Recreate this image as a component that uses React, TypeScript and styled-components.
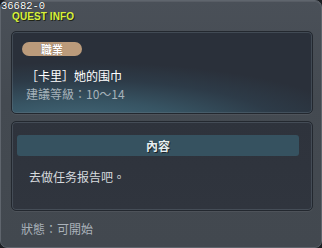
import React from "react";
import styled, { createGlobalStyle } from "styled-components";

const GlobalStyle = createGlobalStyle`
  html, body {
    margin: 0;
    padding: 0;
    background: #1c1f23;
  }
  * {
    box-sizing: border-box;
  }
`;

const Frame = styled.div`
  position: relative;
  width: 322px;
  height: 248px;
  display: flex;
  flex-direction: column;
  padding: 0 8px 0 10px;
  border: 1px solid #5f656d;
  border-radius: 7px;
  background: linear-gradient(180deg, #4a5058 0%, #444a51 40%, #42484f 100%);
  box-shadow: inset 0 1px 0 rgba(255, 255, 255, 0.08);
  font-family: "Noto Sans CJK TC", "Liberation Sans", sans-serif;
`;

const QuestId = styled.div`
  position: absolute;
  left: 0;
  top: -1px;
  font-family: "Liberation Mono", "DejaVu Sans Mono", monospace;
  font-size: 10.5px;
  line-height: 12px;
  color: #ffffff;
  text-shadow: 0 0 1px #000;
`;

const Title = styled.div`
  height: 30px;
  padding: 10px 0 0 1px;
  font-family: "Liberation Sans", "DejaVu Sans", sans-serif;
  font-weight: 700;
  font-size: 10px;
  line-height: 11px;
  letter-spacing: 0.1px;
  color: #d8f23a;
  text-shadow: 1px 1px 0 #20241a;
`;

const Panel = styled.div<{ $tall: number; $glow?: boolean }>`
  height: ${(p) => p.$tall}px;
  border: 1px solid #23282f;
  border-radius: 5px;
  box-shadow: inset 0 0 0 1px rgba(108, 124, 136, 0.35),
    0 1px 0 rgba(255, 255, 255, 0.06);
  background: ${(p) =>
    p.$glow
      ? "radial-gradient(ellipse 110% 95% at 22% 118%, #466c7d 0%, #375463 35%, #2d3b48 62%, #2a303a 85%)"
      : "linear-gradient(180deg, #2e333c 0%, #30353e 100%)"};
`;

const JobPanel = styled(Panel)`
  display: flex;
  flex-direction: column;
  align-items: flex-start;
  padding: 10px 0 0 10px;
`;

const Badge = styled.div`
  width: 60px;
  height: 14px;
  border-radius: 7px;
  background: #bb9b7b;
  color: #ffffff;
  font-size: 11px;
  line-height: 14px;
  font-weight: 700;
  text-align: center;
  text-shadow: 0 0 1px #5a4030;
`;

const QuestName = styled.div`
  margin: 13px 0 0 4px;
  font-size: 12px;
  line-height: 14px;
  color: #ffffff;
`;

const Level = styled.div`
  margin: 4px 0 0 4px;
  font-size: 12px;
  line-height: 14px;
  color: #a6b2ba;
`;

const Gap = styled.div`
  height: 7px;
`;

const ContentPanel = styled(Panel)`
  padding: 13px 13px 0 5px;
`;

const SectionHeader = styled.div`
  height: 21px;
  border-radius: 3px;
  background: #365260;
  color: #e6eef0;
  font-size: 12px;
  font-weight: 700;
  line-height: 21px;
  text-align: center;
  text-shadow: 1px 1px 0 #1a2228;
`;

const Body = styled.div`
  padding: 14px 0 0 12px;
  font-size: 12px;
  line-height: 14px;
  color: #d6dadd;
`;

const Status = styled.div`
  padding: 11px 0 0 10px;
  font-size: 12px;
  line-height: 14px;
  color: #aab2ba;
`;

export default function App() {
  return (
    <>
      <GlobalStyle />
      <Frame>
        <QuestId>36682-0</QuestId>
        <Title>QUEST INFO</Title>
        <JobPanel $tall={83} $glow>
          <Badge>職業</Badge>
          <QuestName>［卡里］她的围巾</QuestName>
          <Level>建議等級：10～14</Level>
        </JobPanel>
        <Gap />
        <ContentPanel $tall={90}>
          <SectionHeader>內容</SectionHeader>
          <Body>去做任务报告吧。</Body>
        </ContentPanel>
        <Status>狀態：可開始</Status>
      </Frame>
    </>
  );
}
